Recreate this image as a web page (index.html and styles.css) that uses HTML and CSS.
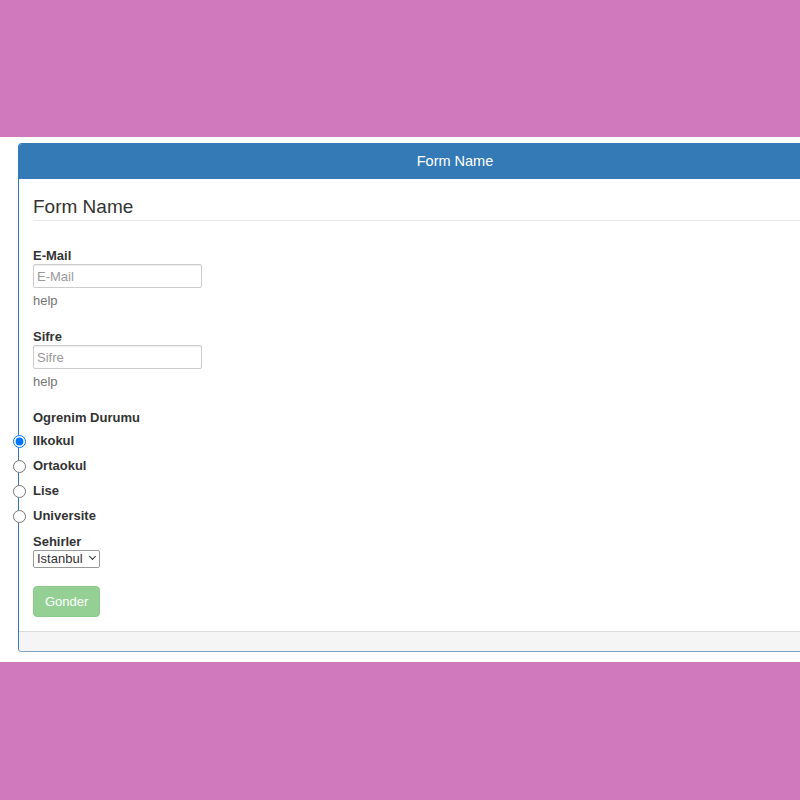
FILE: index.html
```html
<!DOCTYPE html>
<html>
<head>
<meta charset="utf-8">
<link rel="stylesheet" href="styles.css">
</head>
<body>
<div class="band">
  <div class="panel">
    <div class="panel-heading">Form Name</div>
    <div class="panel-body">
      <div class="legend">Form Name</div>
      <div class="group">
        <label class="lbl">E-Mail</label>
        <input class="inp" type="text" placeholder="E-Mail">
        <div class="help">help</div>
      </div>
      <div class="group">
        <label class="lbl">Sifre</label>
        <input class="inp" type="password" placeholder="Sifre">
        <div class="help">help</div>
      </div>
      <div class="radios">
        <label class="lbl">Ogrenim Durumu</label>
        <label class="radio"><input type="radio" name="o" checked>Ilkokul</label>
        <label class="radio"><input type="radio" name="o">Ortaokul</label>
        <label class="radio"><input type="radio" name="o">Lise</label>
        <label class="radio"><input type="radio" name="o">Universite</label>
      </div>
      <div class="selgroup">
        <label class="lbl">Sehirler</label>
        <span class="selwrap"><select class="sel"><option>Istanbul</option></select></span>
      </div>
      <button class="btn" disabled>Gonder</button>
    </div>
    <div class="panel-footer"></div>
  </div>
</div>
</body>
</html>
```
FILE: styles.css
```css
html, body {
  margin: 0;
  padding: 0;
}
body {
  background: #d07abd;
  height: 800px;
  overflow: hidden;
  padding-top: 137px;
  box-sizing: border-box;
  font-family: "Liberation Sans", Arial, sans-serif;
  font-size: 13px;
  color: #333;
}
.band {
  background: #fff;
  height: 525px;
  padding-top: 6px;
  padding-left: 18px;
  box-sizing: border-box;
  overflow: hidden;
}
.panel {
  width: 874px;
  border: 1px solid #337ab7;
  border-bottom-color: #7fa3bd;
  border-radius: 4px;
  box-sizing: border-box;
  background: #fff;
}
.panel-heading {
  background: #337ab7;
  color: #fff;
  text-align: center;
  height: 35px;
  line-height: 35px;
  font-size: 14.5px;
  border-radius: 3px 3px 0 0;
}
.panel-body {
  padding: 15px 14px 14px 14px;
  display: flex;
  flex-direction: column;
  align-items: flex-start;
}
.legend {
  align-self: stretch;
  font-size: 19px;
  line-height: 25px;
  padding-bottom: 1px;
  border-bottom: 1px solid #e8e8e8;
  margin-bottom: 24px;
}
.group {
  display: flex;
  flex-direction: column;
  align-items: flex-start;
  margin-bottom: 15px;
}
.lbl {
  font-weight: bold;
  line-height: 19px;
  padding-top: 1px;
  margin-bottom: -1px;
  display: block;
}
.inp {
  width: 169px;
  height: 24px;
  box-sizing: border-box;
  border: 1px solid #ccc;
  border-radius: 2px;
  box-shadow: inset 0 1px 1px rgba(0,0,0,.075);
  padding: 2px 3px;
  font-family: "Liberation Sans", Arial, sans-serif;
  font-size: 13px;
  color: #555;
  margin: 0;
}
.inp::placeholder {
  color: #999;
}
.help {
  color: #737373;
  line-height: 20px;
  margin-top: 3px;
}
.radios {
  display: flex;
  flex-direction: column;
  gap: 5px;
}
.radio {
  display: flex;
  align-items: center;
  font-weight: bold;
  line-height: 20px;
}
.radio input {
  margin: 0 7px 0 -20px;
  width: 13px;
  height: 13px;
}
.selgroup {
  margin-top: 5px;
  display: flex;
  flex-direction: column;
  align-items: flex-start;
}
.selwrap {
  position: relative;
  display: inline-block;
}
.selwrap::after {
  content: "";
  position: absolute;
  right: 5px;
  top: 4px;
  width: 4px;
  height: 4px;
  border-right: 1px solid #333;
  border-bottom: 1px solid #333;
  transform: rotate(45deg);
  pointer-events: none;
}
.sel {
  appearance: none;
  -webkit-appearance: none;
  width: 67px;
  height: 18px;
  font-family: "Liberation Sans", Arial, sans-serif;
  font-size: 13px;
  line-height: 16px;
  padding: 0 0 0 3px;
  margin: 0;
  color: #333;
  background: #fff;
  border: 1px solid #999;
  border-radius: 2px;
}
.btn {
  margin-top: 18px;
  background: #5cb85c;
  opacity: .65;
  border: 1px solid #4cae4c;
  color: #fff;
  border-radius: 4px;
  font-family: "Liberation Sans", Arial, sans-serif;
  font-size: 13px;
  line-height: 20px;
  padding: 5px 11px;
  width: 67px;
  height: 31px;
}
.panel-footer {
  background: #f5f5f5;
  border-top: 1px solid #ddd;
  height: 19px;
  border-radius: 0 0 3px 3px;
}
```
